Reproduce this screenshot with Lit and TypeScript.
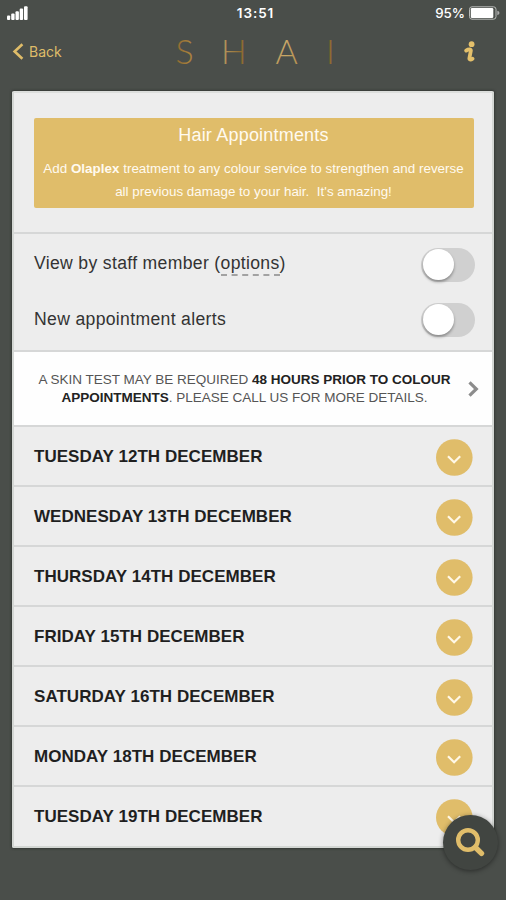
import { LitElement, html, css } from "lit";
import { customElement } from "lit/decorators.js";

const DAYS = [
  "TUESDAY 12TH DECEMBER",
  "WEDNESDAY 13TH DECEMBER",
  "THURSDAY 14TH DECEMBER",
  "FRIDAY 15TH DECEMBER",
  "SATURDAY 16TH DECEMBER",
  "MONDAY 18TH DECEMBER",
  "TUESDAY 19TH DECEMBER",
];

@customElement("toggle-switch")
class ToggleSwitch extends LitElement {
  static styles = css`
    :host { display: block; width: 54px; height: 34px; }
    .track { display: flex; align-items: center; width: 54px; height: 34px; border-radius: 17px; background: #d0d0d0; }
    .knob { width: 31px; height: 31px; margin-left: 2px; border-radius: 50%; background: #fff; box-shadow: 0 2px 3px rgba(0, 0, 0, 0.35); }
  `;
  render() {
    return html`<div class="track"><div class="knob"></div></div>`;
  }
}

@customElement("day-row")
class DayRow extends LitElement {
  static properties = { label: {} };
  declare label: string;
  static styles = css`
    :host { display: flex; box-sizing: border-box; height: 60px; align-items: center; justify-content: space-between; padding: 2px 20px 0 20px; border-top: 2px solid #d6d7d7; }
    .label { font-weight: 700; font-size: 17px; line-height: 20px; color: #1f1f1f; white-space: nowrap; padding-bottom: 1px; letter-spacing: 0.04px; }
    .dot { width: 37px; height: 37px; display: block; margin-right: -1px; }
  `;
  render() {
    return html`
      <span class="label">${this.label}</span>
      <svg class="dot" viewBox="0 0 37 37">
        <circle cx="18.3" cy="18.5" r="18.3" fill="#e0bd6a" />
        <path d="M12 17.200l6.100 6 6.100-6" fill="none" stroke="#fff8e6" stroke-width="2.2" />
      </svg>
    `;
  }
}

@customElement("app-root")
class AppRoot extends LitElement {
  static styles = css`
    :host { display: flex; flex-direction: column; position: relative; box-sizing: border-box; width: 506px; height: 900px; overflow: hidden; background: #4a4e4a; font-family: "Liberation Sans", Arial, sans-serif; color: #333; }
    .status { display: grid; grid-template-columns: 1fr auto 1fr; align-items: center; height: 26px; padding: 0 6px 0 7px; color: #fff; font-size: 13px; line-height: 16px; }
    .status svg { display: block; }
    .time { font-family: Inter, sans-serif; font-weight: 600; font-size: 13.5px; letter-spacing: 0.9px; margin-right: -4px; }
    .battery { display: flex; justify-content: flex-end; align-items: center; gap: 4px; font-family: Inter, sans-serif; font-size: 13.3px; font-weight: 500; }
    .nav { display: grid; grid-template-columns: 164px 1fr 164px; align-items: center; height: 52px; color: #dfbc69; }
    .back { display: flex; align-items: center; gap: 5px; padding-left: 12px; font-family: Inter, sans-serif; font-size: 14px; }
    .back span { padding-bottom: 2px; }
    .logo { display: block; width: 178px; height: 52px; font-family: Lato, sans-serif; font-weight: 300; font-size: 34px; }
    .info { justify-self: end; display: block; margin-right: 30px; }
    .card { box-sizing: border-box; width: 482px; height: 757px; margin: 13px 0 0 12px; background: #ededed; border: 2px solid #d4d7d4; border-top-color: #dcdedc; box-shadow: 0 0 2px 1px rgba(35, 38, 35, 0.5); border-radius: 2px; overflow: hidden; }
    .intro { height: 139px; box-sizing: border-box; padding: 25px 18px 0 20px; }
    .banner { box-sizing: border-box; height: 90px; border-radius: 2px; background: #e0bd6a; color: #fffaf0; text-align: center; padding-top: 6px; white-space: pre; }
    .title { font-size: 18px; line-height: 22px; letter-spacing: 0.2px; margin-left: -1px; }
    .copy { margin-top: 11px; margin-left: -1px; font-size: 13.4px; line-height: 23px; letter-spacing: 0.02px; }
    .options { box-sizing: border-box; height: 118px; border-top: 2px solid #d6d7d7; padding: 3px 17px 0 20px; }
    .option { display: flex; align-items: center; justify-content: space-between; height: 55px; font-size: 17.6px; letter-spacing: 0.33px; color: #333; }
    .dashed { display: inline-block; line-height: 21px; border-bottom: 2px dashed #a2a2a2; }
    .notice { box-sizing: border-box; height: 75px; display: flex; align-items: center; border-top: 2px solid #d6d7d7; background: #fefefe; padding: 1px 13px 0 8px; }
    .notice p { flex: 1; margin: 0 0 0 -1px; text-align: center; font-size: 13.5px; line-height: 18px; white-space: nowrap; color: #555; }
    .notice b { color: #222; }
    .search { position: absolute; left: 443px; top: 815px; width: 55px; height: 55px; border-radius: 50%; background: #414541; box-shadow: 0 1px 5px rgba(0, 0, 0, 0.45); }
    .search svg { display: block; }
  `;

  render() {
    return html`
      <div class="status">
        <svg width="22" height="15" viewBox="0 0 22 15" fill="#fff">
          <rect x="0" y="9.5" width="3.2" height="4.5" rx="1" />
          <rect x="4.2" y="7.5" width="3.4" height="6.5" rx="1" />
          <rect x="8.5" y="5.2" width="3.4" height="8.8" rx="1" />
          <rect x="12.7" y="2.6" width="3.4" height="11.4" rx="1" />
          <rect x="17" y="0.3" width="3.6" height="13.7" rx="1" />
        </svg>
        <span class="time">13:51</span>
        <div class="battery">
          <span>95%</span>
          <svg width="31" height="14" viewBox="0 0 31 14">
            <rect x="0.5" y="0.8" width="26.5" height="12.4" rx="2.5" fill="none" stroke="#b9bbb9" />
            <rect x="1.8" y="2" width="22.5" height="10" rx="1.2" fill="#fff" />
            <path d="M28.3 4.8q2.2.6 2.2 2.2t-2.2 2.2z" fill="#aaa" />
          </svg>
        </div>
      </div>

      <div class="nav">
        <div class="back">
          <svg width="12" height="18" viewBox="0 0 12 18"><path d="M10.4 1.2L2.600 8.500l7.800 7.300" fill="none" stroke="#dfbc69" stroke-width="2.6" /></svg>
          <span>Back</span>
        </div>
        <svg class="logo" viewBox="0 0 178 52">
          <defs>
            <linearGradient id="gold" gradientUnits="userSpaceOnUse" x1="12" y1="0" x2="168" y2="0">
              <stop offset="0" stop-color="#8d6a30" />
              <stop offset="0.08" stop-color="#a8803c" />
              <stop offset="0.31" stop-color="#b3935a" />
              <stop offset="0.42" stop-color="#8d6a30" />
              <stop offset="0.7" stop-color="#c9a868" />
              <stop offset="0.85" stop-color="#a27b3c" />
              <stop offset="1" stop-color="#8d6a30" />
            </linearGradient>
          </defs>
          <g fill="url(#gold)">
            <text x="11.5" y="38">S</text>
            <text x="57" y="38">H</text>
            <text x="111.5" y="38">A</text>
            <text x="162" y="38">I</text>
          </g>
        </svg>
        <svg class="info" width="12" height="22" viewBox="0 0 12 22">
          <circle cx="7.6" cy="3.2" r="2.9" fill="#e4c06b" />
          <path d="M2.200 9.600C4.500 8 7.200 8 6.800 10L5.400 17.200C5.200 19.200 7 19 8.500 17.800" fill="none" stroke="#e4c06b" stroke-width="3.8" stroke-linecap="round" />
        </svg>
      </div>

      <div class="card">
        <div class="intro">
          <div class="banner"><div class="title">Hair Appointments</div><div class="copy">Add <b>Olaplex</b> treatment to any colour service to strengthen and reverse
all previous damage to your hair.  It's amazing!</div></div>
        </div>
        <div class="options">
          <div class="option">
            <span>View by staff member (<span class="dashed">options</span>)</span>
            <toggle-switch></toggle-switch>
          </div>
          <div class="option">
            <span>New appointment alerts</span>
            <toggle-switch></toggle-switch>
          </div>
        </div>
        <div class="notice">
          <p>A SKIN TEST MAY BE REQUIRED <b>48 HOURS PRIOR TO COLOUR<br />APPOINTMENTS</b>. PLEASE CALL US FOR MORE DETAILS.</p>
          <svg width="11" height="16" viewBox="0 0 11 16"><path d="M1.5 1.4L8.300 8l-6.800 6.600" fill="none" stroke="#8c8c8c" stroke-width="3.2" /></svg>
        </div>
        ${DAYS.map((day) => html`<day-row .label=${day}></day-row>`)}
      </div>

      <div class="search">
        <svg width="55" height="55" viewBox="0 0 55 55" fill="none" stroke="#e0bd6a">
          <circle cx="25" cy="25" r="9.8" stroke-width="4.4" />
          <path d="M32.500 32.500l6 5.900" stroke-width="5.4" stroke-linecap="round" />
        </svg>
      </div>
    `;
  }
}
